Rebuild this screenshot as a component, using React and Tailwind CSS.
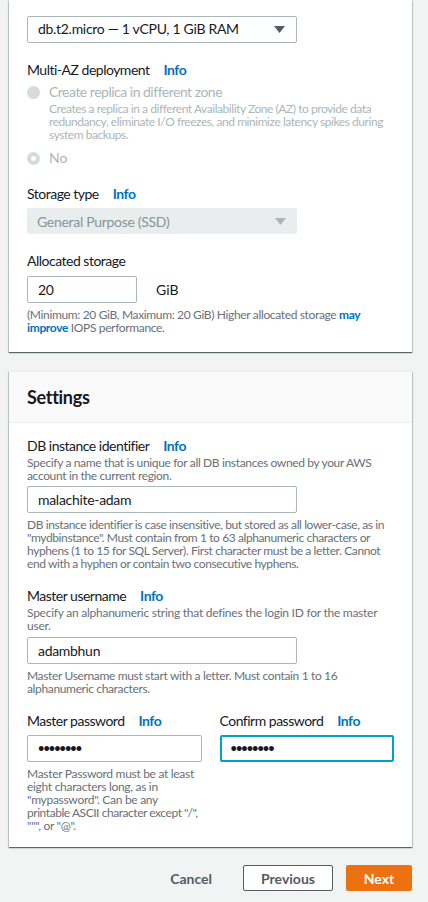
import React from "react";

const font = { fontFamily: "Lato, 'Liberation Sans', sans-serif" };

const Info = () => (
  <span className="ml-[14px] font-bold text-[#0073bb]">Info</span>
);

const Label = ({ children, info }) => (
  <div className="text-[14px] leading-[20px] tracking-[-0.5px] text-[#16191f]">
    {children}
    {info && <Info />}
  </div>
);

const Desc = ({ children, className = "tracking-[-0.35px]" }) => (
  <p className={`text-[12px] leading-[13px] text-[#687078] ${className}`}>{children}</p>
);

const Caret = ({ color }) => (
  <svg width="11" height="7" viewBox="0 0 11 7" className="shrink-0">
    <path d="M0 0h11L5.5 7z" fill={color} />
  </svg>
);

const TextBox = ({ value, className = "" }) => (
  <div className={`h-[27px] flex items-center px-[10px] text-[14px] tracking-[-0.3px] text-[#16191f] bg-white border border-[#aab7b8] rounded-[2px] ${className}`}>
    {value}
  </div>
);

const Dots = () => (
  <span className="text-[11px] font-bold tracking-[-1px] text-[#16191f]">••••••••</span>
);

export default function App() {
  return (
    <div style={font} className="min-h-[902px] bg-[#f2f3f3] pl-[9px] pr-[16px] pb-4">
      {/* Instance / storage card */}
      <div className="bg-white px-[18px] pt-4 pb-[18px] shadow-[0_1px_1px_0_rgba(0,28,36,0.5),1px_1px_1px_0_rgba(0,28,36,0.15),-1px_1px_1px_0_rgba(0,28,36,0.15)]">
        <div className="h-[27px] w-[270px] flex items-center justify-between pl-[10px] pr-[11px] border border-[#aab7b8] rounded-[2px] text-[14px] tracking-[-0.3px] text-[#16191f]">
          <span className="-mt-[2px]">db.t2.micro — 1 vCPU, 1 GiB RAM</span>
          <Caret color="#545b64" />
        </div>

        <div className="mt-[17px]">
          <Label info>Multi-AZ deployment</Label>
        </div>

        <div className="mt-[2px] flex gap-[9px]">
          <span className="mt-[4px] w-[13px] h-[13px] rounded-full bg-[#d5dbdb] shrink-0"></span>
          <div>
            <div className="text-[14px] leading-[20px] tracking-[-0.5px] text-[#aab7b8]">Create replica in different zone</div>
            <Desc className="tracking-[-0.45px] !text-[#aab7b8]">
              Creates a replica in a different Availability Zone (AZ) to provide data redundancy, eliminate I/O freezes, and minimize latency spikes during system backups.
            </Desc>
          </div>
        </div>

        <div className="mt-[7px] flex items-center gap-[9px]">
          <span className="w-[13px] h-[13px] rounded-full border-[4px] border-[#d5dbdb] bg-white shrink-0"></span>
          <span className="text-[14px] leading-[20px] text-[#aab7b8]">No</span>
        </div>

        <div className="mt-4">
          <Label info>Storage type</Label>
        </div>
        <div className="mt-1 h-[26px] w-[270px] flex items-center justify-between pl-[10px] pr-[11px] bg-[#eaeded] rounded-[2px] text-[14px] tracking-[-0.3px] text-[#879596]">
          <span>General Purpose (SSD)</span>
          <Caret color="#aab7b8" />
        </div>

        <div className="mt-[17px]">
          <Label>Allocated storage</Label>
        </div>
        <div className="mt-[5px] flex items-center">
          <TextBox value="20" className="w-[110px]" />
          <span className="ml-[19px] text-[14px] text-[#16191f]">GiB</span>
        </div>
        <Desc className="mt-[5px] tracking-[-0.35px]">
          (Minimum: 20 GiB, Maximum: 20 GiB) Higher allocated storage{" "}
          <span className="font-bold text-[#0073bb]">may improve</span> IOPS performance.
        </Desc>
      </div>

      {/* Settings card */}
      <div className="mt-[19px] bg-white shadow-[0_1px_1px_0_rgba(0,28,36,0.5),1px_1px_1px_0_rgba(0,28,36,0.15),-1px_1px_1px_0_rgba(0,28,36,0.15)]">
        <div className="h-[52px] flex items-center px-[18px] bg-[#fafafa] border-t border-[#eaeded] border-b">
          <h2 className="text-[18px] font-bold tracking-[-0.3px] text-[#16191f]">Settings</h2>
        </div>

        <div className="px-[18px] pt-[13px] pb-[15px]">
          <Label info>DB instance identifier</Label>
          <Desc>Specify a name that is unique for all DB instances owned by your AWS account in the current region.</Desc>
          <TextBox value="malachite-adam" className="mt-1 w-[270px]" />
          <Desc className="mt-[5px] tracking-[-0.4px]">
            DB instance identifier is case insensitive, but stored as all lower-case, as in "mydbinstance". Must contain from 1 to 63 alphanumeric characters or hyphens (1 to 15 for SQL Server). First character must be a letter. Cannot end with a hyphen or contain two consecutive hyphens.
          </Desc>

          <div className="mt-4">
            <Label info>Master username</Label>
          </div>
          <Desc className="tracking-[-0.25px]">Specify an alphanumeric string that defines the login ID for the master user.</Desc>
          <TextBox value="adambhun" className="mt-[5px] w-[270px]" />
          <Desc className="mt-[5px] tracking-[-0.35px]">
            Master Username must start with a letter. Must contain 1 to 16 alphanumeric characters.
          </Desc>

          <div className="mt-4 grid grid-cols-2 gap-[18px]">
            <div>
              <Label info>Master password</Label>
              <TextBox value={<Dots />} className="mt-1" />
              <Desc className="mt-[5px] tracking-[-0.3px]">
                Master Password must be at least eight characters long, as in "mypassword". Can be any
                <span className="block whitespace-nowrap tracking-[-0.45px]">printable ASCII character except "/",</span>
                """, or "@".
              </Desc>
            </div>
            <div>
              <Label info>Confirm password</Label>
              <div className="mt-1 h-[27px] flex items-center px-[9px] border-2 border-[#00a1c9] rounded-[2px]">
                <Dots />
              </div>
            </div>
          </div>
        </div>
      </div>

      {/* Actions */}
      <div className="mt-[18px] flex items-center justify-end">
        <button className="mr-[31px] text-[14px] font-bold text-[#545b64]">Cancel</button>
        <button className="w-[90px] h-[26px] mr-[13px] border border-[#545b64] rounded-[2px] bg-white text-[14px] font-bold text-[#545b64]">
          Previous
        </button>
        <button className="w-[66px] h-[26px] rounded-[2px] bg-[#ec7211] text-[14px] font-bold text-white">
          Next
        </button>
      </div>
    </div>
  );
}
